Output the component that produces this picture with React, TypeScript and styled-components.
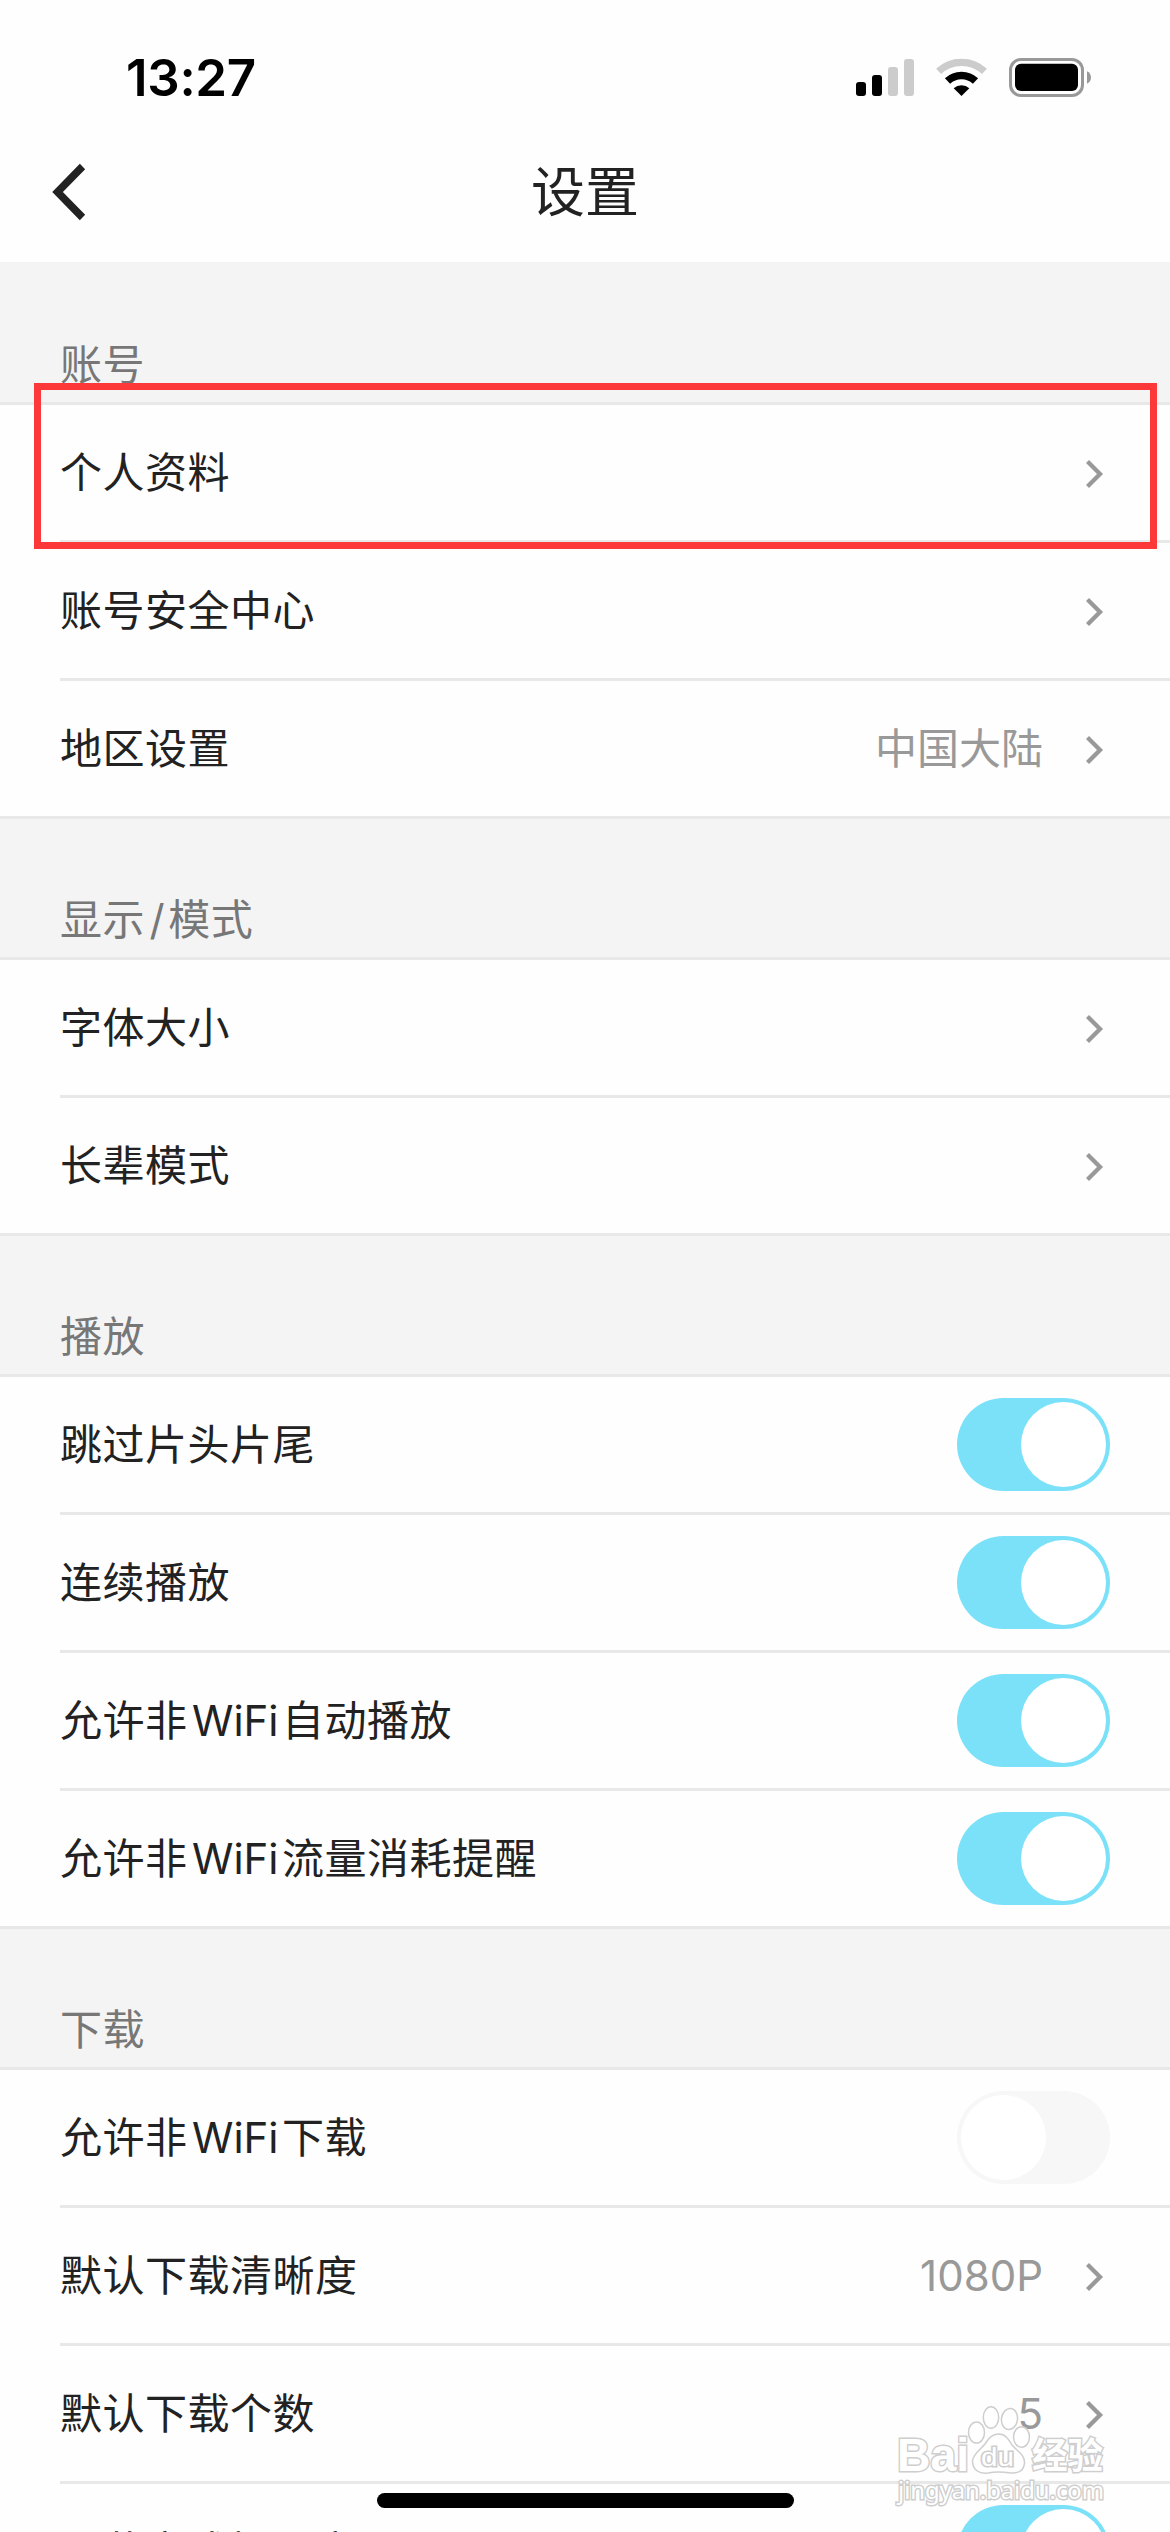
import React from "react";
import styled, { createGlobalStyle } from "styled-components";

const Global = createGlobalStyle`
  * { box-sizing: border-box; }
  html, body { margin: 0; padding: 0; background: #fff; }
  body { width: 1170px; height: 2532px; overflow: hidden; }
`;

const Screen = styled.main`
  position: relative;
  display: flex;
  flex-direction: column;
  width: 1170px;
  height: 2532px;
  overflow: hidden;
  background: #fefefe;
  color: #222;
  font-family: Inter, "Noto Sans CJK SC", sans-serif;
`;

const StatusBar = styled.header`
  display: flex;
  flex: none;
  align-items: center;
  justify-content: space-between;
  height: 132px;
  padding: 24px 78px 0 126px;
`;

const Clock = styled.time`
  color: #000;
  font-size: 51px;
  font-weight: 600;
  line-height: 60px;
  letter-spacing: -0.3px;
`;

const StatusIcons = styled.svg`
  display: block;
  width: 236px;
  height: 40px;
`;

const NavBar = styled.nav`
  display: grid;
  flex: none;
  grid-template-columns: 120px 1fr 120px;
  align-items: center;
  height: 130px;
  padding-bottom: 10px;
`;

const BackButton = styled.button`
  display: flex;
  align-items: center;
  height: 100px;
  padding: 0 0 0 51px;
  border: 0;
  background: none;
`;

const Title = styled.h1`
  margin: 0;
  padding-top: 2px;
  text-align: center;
  font-size: 54px;
  font-weight: 400;
  line-height: 80px;
`;

const SectionHeader = styled.h2<{ $first?: boolean }>`
  display: flex;
  flex: none;
  align-items: flex-end;
  height: ${(p) => (p.$first ? 140 : 141)}px;
  margin: 0;
  padding: 0 0 7px 60px;
  border-top: ${(p) => (p.$first ? 0 : 3)}px solid #e8e8e8;
  background: #f4f4f4;
  color: #777;
  font-size: 42px;
  font-weight: 400;
  line-height: 60px;
  letter-spacing: 0.5px;
`;

const Rows = styled.ul`
  flex: none;
  margin: 0;
  padding: 0;
  border-top: 3px solid #e8e8e8;
  list-style: none;
`;

const Row = styled.li`
  display: flex;
  align-items: center;
  height: 138px;
  margin-left: 60px;
  padding-right: 60px;
  border-bottom: 3px solid #e8e8e8;

  &:last-child {
    height: 135px;
    border-bottom: 0;
  }
`;

const Label = styled.span`
  flex: 1;
  font-size: 42px;
  line-height: 60px;
  letter-spacing: 0.5px;
  white-space: nowrap;
`;

const Latin = styled.span`
  margin: 0 3.500px 0 4.500px;
  letter-spacing: 0;
`;

const Value = styled.span`
  margin-right: 43px;
  color: #999;
  font-size: 42px;
  line-height: 60px;
`;

const Chevron = styled.svg`
  width: 18px;
  height: 30px;
  margin: 3px 6px 0 0;
`;

const Switch = styled.span<{ $on: boolean }>`
  display: flex;
  justify-content: ${(p) => (p.$on ? "flex-end" : "flex-start")};
  width: 153px;
  height: 93px;
  padding: 4px;
  border-radius: 47px;
  background: ${(p) => (p.$on ? "#7ae1f9" : "#f7f7f7")};
`;

const Knob = styled.span`
  width: 85px;
  height: 85px;
  border-radius: 50%;
  background: #fff;
`;

const Highlight = styled.div`
  position: absolute;
  left: 34px;
  top: 383px;
  width: 1123px;
  height: 166px;
  border: 7px solid #fd3838;
`;

const HomeIndicator = styled.div`
  position: absolute;
  left: 377px;
  top: 2493px;
  width: 417px;
  height: 15px;
  border-radius: 8px;
  background: #000;
`;

const Watermark = styled.svg`
  position: absolute;
  left: 890px;
  top: 2400px;
  width: 220px;
  height: 110px;
  fill: rgba(255, 255, 255, 0.75);
  stroke: #cecece;
  stroke-width: 1.5;

  text {
    stroke-width: 3;
    fill: #fff;
    paint-order: stroke;
  }
`;

type Item = { label: string; value?: string; on?: boolean };
type Group = { title: string; items: Item[] };

const groups: Group[] = [
  {
    title: "账号",
    items: [{ label: "个人资料" }, { label: "账号安全中心" }, { label: "地区设置", value: "中国大陆" }],
  },
  { title: "显示/模式", items: [{ label: "字体大小" }, { label: "长辈模式" }] },
  {
    title: "播放",
    items: [
      { label: "跳过片头片尾", on: true },
      { label: "连续播放", on: true },
      { label: "允许非WiFi自动播放", on: true },
      { label: "允许非WiFi流量消耗提醒", on: true },
    ],
  },
  {
    title: "下载",
    items: [
      { label: "允许非WiFi下载", on: false },
      { label: "默认下载清晰度", value: "1080P" },
      { label: "默认下载个数", value: "5" },
      { label: "下载完成提示音", on: true },
    ],
  },
];

// Gives Latin runs inside Chinese text a little air on both sides.
function Mixed({ text }: { text: string }) {
  return (
    <span>
      {text.split(/([A-Za-z/]+)/).map((part, i) => (i % 2 ? <Latin key={i}>{part}</Latin> : part))}
    </span>
  );
}

function SettingRow({ label, value, on }: Item) {
  return (
    <Row>
      <Label>
        <Mixed text={label} />
      </Label>
      {value && <Value>{value}</Value>}
      {on === undefined ? (
        <Chevron viewBox="0 0 18 30">
          <path d="M1.500 2.500L14 15L1.500 27.500" fill="none" stroke="#999" strokeWidth="4.300" />
        </Chevron>
      ) : (
        <Switch $on={on}>
          <Knob />
        </Switch>
      )}
    </Row>
  );
}

export default function App() {
  return (
    <Screen>
      <Global />
      <StatusBar>
        <Clock>13:27</Clock>
        <StatusIcons viewBox="0 0 236 40">
          <rect x="0" y="24" width="10" height="14" rx="3" />
          <rect x="16" y="17" width="10" height="21" rx="3" />
          <rect x="32" y="9" width="10" height="29" rx="3" fill="#ccc" />
          <rect x="48" y="1" width="10" height="37" rx="3" fill="#ccc" />
          <path d="M82.600 13.400A33.600 33.600 0 0 1 128.400 13.400" fill="none" stroke="#ccc" strokeWidth="7.300" />
          <path d="M91.500 23A20.500 20.500 0 0 1 119.500 23" fill="none" stroke="#000" strokeWidth="7.600" />
          <path d="M105.500 38L97.700 30.200A11.700 11.700 0 0 1 113.300 30.200Z" />
          <rect x="154.500" y="1.500" width="72" height="36" rx="10.500" fill="none" stroke="#999" strokeWidth="3" />
          <rect x="159" y="5.700" width="63" height="27.300" rx="6" />
          <path d="M231 13.300C236.300 15.500 236.300 23.500 231 25.700Z" fill="#999" />
        </StatusIcons>
      </StatusBar>
      <NavBar>
        <BackButton aria-label="返回">
          <svg width="36" height="58" viewBox="0 0 36 58">
            <path d="M31.500 3.500L6.500 29L31.500 54.500" fill="none" stroke="#222" strokeWidth="7.500" />
          </svg>
        </BackButton>
        <Title>设置</Title>
      </NavBar>
      {groups.map((g, i) => (
        <React.Fragment key={g.title}>
          <SectionHeader $first={i === 0}>
            <Mixed text={g.title} />
          </SectionHeader>
          <Rows>
            {g.items.map((it) => (
              <SettingRow key={it.label} {...it} />
            ))}
          </Rows>
        </React.Fragment>
      ))}
      <Highlight />
      <Watermark viewBox="0 0 220 110">
        <ellipse cx="86.500" cy="32.500" rx="8" ry="10.500" />
        <ellipse cx="101" cy="17.500" rx="7.700" ry="10.700" />
        <ellipse cx="119.500" cy="19" rx="8" ry="10.500" transform="rotate(8 119.500 19)" />
        <ellipse cx="131.500" cy="37" rx="8" ry="10.300" />
        <path d="M108.500 34C116 34 119 40 122 45C127 51 135 55 134.500 63C134 70 129 73.500 121 73C114 72 105 71.500 98 73C89 74 82.500 70 82.500 61C83 54 91 49 95 44C99 38 102 34 108.500 34Z" />
        <text x="7" y="71" fontFamily="'Liberation Sans', sans-serif" fontWeight="700" fontSize="47" textLength="72" lengthAdjust="spacingAndGlyphs">Bai</text>
        <text x="91" y="65.500" fontFamily="'Liberation Sans', sans-serif" fontSize="25" textLength="33" lengthAdjust="spacingAndGlyphs">du</text>
        <text x="142" y="69" fontFamily="'Noto Sans CJK SC', sans-serif" fontWeight="700" fontSize="36" textLength="71" lengthAdjust="spacingAndGlyphs">经验</text>
        <text x="8" y="99" fontFamily="'Noto Sans', sans-serif" fontSize="24" textLength="206" lengthAdjust="spacingAndGlyphs">jingyan.baidu.com</text>
      </Watermark>
      <HomeIndicator />
    </Screen>
  );
}
